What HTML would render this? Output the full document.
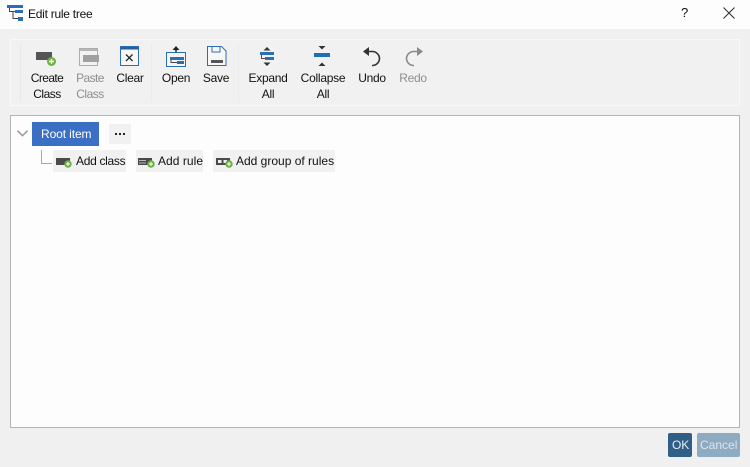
<!DOCTYPE html>
<html><head><meta charset="utf-8">
<style>
html,body{margin:0;padding:0}
body{width:750px;height:467px;position:relative;overflow:hidden;background:#f0f0f0;font-family:"Liberation Sans",sans-serif;color:#111;font-size:12px}
.a{position:absolute}
.t{position:absolute;white-space:nowrap;text-align:center;line-height:16px;font-size:12px;transform:translateX(-50%);letter-spacing:-.3px}
.g{color:#8e8e8e}
svg{position:absolute;overflow:visible}
.chip{position:absolute;background:#f1f1f1;height:22px}
.l{position:absolute;white-space:nowrap;font-size:12px;line-height:16px}
</style></head><body>
<div class="a" style="left:0;top:0;width:750px;height:29px;background:#fdfdfd"></div>
<svg style="left:7px;top:5px" width="17" height="16" viewBox="0 0 17 16">
<rect x="0" y="0" width="16" height="3" fill="#2a6fb5"/>
<rect x="8" y="5" width="8" height="3" fill="#2a6fb5"/>
<rect x="11" y="12" width="5" height="4" fill="#2a6fb5"/>
<path d="M2.500 3V6.500H8M6 6.500V13.500H11" fill="none" stroke="#444" stroke-width="1"/>
</svg>
<div class="l" style="left:28px;top:6px;letter-spacing:-.26px">Edit rule tree</div>
<div class="l" style="left:681px;top:5px;font-size:13px">?</div>
<svg style="left:723px;top:7px" width="12" height="12"><path d="M.5 .5L11.5 11.5M11.5 .5L.5 11.5" stroke="#333" stroke-width="1.1"/></svg>

<div class="a" style="left:10px;top:39px;width:730px;height:67px;background:#f1f1f1;border:1px solid #f8f8f8;box-sizing:border-box"></div>
<div class="a" style="left:20px;top:44px;width:1px;height:58px;background:#e8e8e8"></div>
<div class="a" style="left:151px;top:44px;width:1px;height:58px;background:#ebebeb"></div>
<div class="a" style="left:238px;top:44px;width:1px;height:58px;background:#ebebeb"></div>

<!-- Create class -->
<svg style="left:36px;top:52px" width="22" height="16">
<rect x="0" y="0" width="16" height="8" fill="#555"/>
<circle cx="15.500" cy="9.500" r="4.500" fill="#6cb33f"/>
<path d="M15.500 7V12M13 9.500H18" stroke="#fff" stroke-width="1.400"/>
</svg>
<div class="t" style="left:47px;top:70px;letter-spacing:-.6px">Create</div>
<div class="t" style="left:47px;top:86px;letter-spacing:-.5px">Class</div>

<!-- Paste -->
<svg style="left:79px;top:48px" width="21" height="19">
<rect x=".5" y=".5" width="18" height="17" fill="#f2f2f2" stroke="#adadad"/>
<rect x="1" y="1" width="17" height="2" fill="#b5b5b5"/>
<rect x="4" y="7" width="16" height="7" fill="#a0a0a0"/>
</svg>
<div class="t g" style="left:90px;top:70px;letter-spacing:-.6px">Paste</div>
<div class="t g" style="left:90px;top:86px;letter-spacing:-.5px">Class</div>

<!-- Clear -->
<svg style="left:120px;top:46px" width="20" height="20">
<rect x=".5" y=".5" width="18" height="19" fill="#f7f7f7" stroke="#2a6fb5"/>
<rect x="1" y="1" width="17" height="2.500" fill="#2a5d9a"/>
<path d="M6 8.500L12.500 15M12.500 8.500L6 15" stroke="#222" stroke-width="1.300"/>
</svg>
<div class="t" style="left:130px;top:70px">Clear</div>

<!-- Open -->
<svg style="left:166px;top:45px" width="21" height="22">
<path d="M10 1L6.500 5H13.500Z" fill="#222"/><path d="M10 4V9" stroke="#222" stroke-width="1.500"/>
<rect x=".5" y="7.500" width="19" height="14" fill="#f5f5f5" stroke="#2a6fb5"/>
<rect x="4" y="12" width="14" height="3" fill="#2a6fb5"/>
<rect x="11" y="16" width="7" height="3" fill="#2a6fb5"/>
<path d="M5 15V17.500H11" fill="none" stroke="#444"/>
</svg>
<div class="t" style="left:176px;top:70px">Open</div>

<!-- Save -->
<svg style="left:207px;top:46px" width="20" height="20">
<path d="M.5 .5H14.500L19 5V19.500H.5Z" fill="#f7f7f7" stroke="#2a6fb5"/>
<path d="M5 1V6H13V1" fill="none" stroke="#2a6fb5"/>
<rect x="4" y="14" width="12" height="3" fill="#555"/>
</svg>
<div class="t" style="left:216px;top:70px">Save</div>

<!-- Expand -->
<svg style="left:260px;top:46px" width="16" height="21">
<path d="M7 1L3.500 4.500H10.500Z" fill="#333"/>
<rect x="0" y="6" width="14" height="3" fill="#2a6fb5"/>
<rect x="5" y="11" width="9" height="3" fill="#2a6fb5"/>
<path d="M1.500 9V12.500H5" stroke="#7a3a2a" fill="none"/>
<path d="M7 20L3.500 16.500H10.500Z" fill="#333"/>
</svg>
<div class="t" style="left:268px;top:70px">Expand</div>
<div class="t" style="left:268px;top:86px">All</div>

<!-- Collapse -->
<svg style="left:314px;top:46px" width="16" height="20">
<path d="M8 3.500L4.500 0H11.500Z" fill="#333"/>
<rect x="0" y="7" width="16" height="4" fill="#1f6fb5"/>
<path d="M8 16.500L4.500 20H11.500Z" fill="#333"/>
</svg>
<div class="t" style="left:323px;top:70px;letter-spacing:-.25px">Collapse</div>
<div class="t" style="left:323px;top:86px">All</div>

<!-- Undo -->
<svg style="left:363px;top:47px" width="18" height="20">
<path d="M6 0L0 4.500L6 9Z" fill="#333"/>
<path d="M4 4.500H9A7.200 7.200 0 0 1 16.500 11.500A7.200 7.200 0 0 1 9 18.500" fill="none" stroke="#333" stroke-width="1.600"/>
</svg>
<div class="t" style="left:372px;top:70px">Undo</div>

<!-- Redo -->
<svg style="left:405px;top:47px" width="18" height="20">
<path d="M12 0L18 4.500L12 9Z" fill="#8a8a8a"/>
<path d="M14 4.500H9A7.200 7.200 0 0 0 1.500 11.500A7.200 7.200 0 0 0 9 18.500" fill="none" stroke="#8a8a8a" stroke-width="1.600"/>
</svg>
<div class="t g" style="left:413px;top:70px">Redo</div>

<!-- Tree panel -->
<div class="a" style="left:10px;top:115px;width:730px;height:313px;box-sizing:border-box;background:#fdfdfd;border:1px solid #b4b4b4"></div>
<svg style="left:17px;top:130px" width="11" height="7"><path d="M.5 .7L5.500 5.700L10.500 .7" fill="none" stroke="#9a9a9a" stroke-width="1.500"/></svg>
<div class="a" style="left:32px;top:122px;width:67px;height:24px;background:#3b6fc4"></div>
<div class="l" style="left:41px;top:126px;color:#fff;letter-spacing:-.1px">Root item</div>
<div class="chip" style="left:109px;top:124px;width:22px;height:20px"></div>
<svg style="left:115px;top:133px" width="11" height="3"><rect width="2" height="2" x="0" fill="#222"/><rect width="2" height="2" x="4" fill="#222"/><rect width="2" height="2" x="8" fill="#222"/></svg>

<div class="a" style="left:41px;top:150px;width:11px;height:14px;border-left:1px solid #a8a8a8;border-bottom:1px solid #a8a8a8;box-sizing:border-box"></div>

<div class="chip" style="left:53px;top:150px;width:73px"></div>
<svg style="left:56px;top:157px" width="17" height="11">
<rect x="0" y="1" width="14" height="7" fill="#4a4a4a"/>
<circle cx="12" cy="7" r="3.700" fill="#6cb33f"/><path d="M12 5V9M10 7H14" stroke="#fff"/>
</svg>
<div class="l" style="left:76px;top:153px;letter-spacing:-.3px">Add class</div>

<div class="chip" style="left:136px;top:150px;width:67px"></div>
<svg style="left:138px;top:157px" width="17" height="11">
<rect x="0" y="1" width="14" height="7" fill="#4a4a4a"/>
<path d="M1 3.500H8M1 6H8" stroke="#ddd" stroke-width=".8"/>
<circle cx="13" cy="7" r="3.700" fill="#6cb33f"/><path d="M13 5V9M11 7H15" stroke="#fff"/>
</svg>
<div class="l" style="left:158px;top:153px;letter-spacing:.05px">Add rule</div>

<div class="chip" style="left:213px;top:150px;width:122px"></div>
<svg style="left:216px;top:157px" width="17" height="11">
<rect x="0" y="1" width="14" height="7" fill="#4a4a4a"/>
<rect x="2" y="3" width="3.500" height="3" fill="#eee"/><rect x="7.500" y="3" width="3.500" height="3" fill="#eee"/>
<circle cx="13" cy="7" r="3.700" fill="#6cb33f"/><path d="M13 5V9M11 7H15" stroke="#fff"/>
</svg>
<div class="l" style="left:236px;top:153px">Add group of rules</div>

<!-- Buttons -->
<div class="a" style="left:668px;top:433px;width:24px;height:24px;background:#2f5f87;border-radius:2px"></div>
<div class="l" style="left:672px;top:437px;color:#e6eef5;letter-spacing:-.1px">OK</div>
<div class="a" style="left:697px;top:433px;width:43px;height:24px;background:#8fabc2;border-radius:2px"></div>
<div class="l" style="left:700px;top:437px;color:#dbe5ed">Cancel</div>
</body></html>
